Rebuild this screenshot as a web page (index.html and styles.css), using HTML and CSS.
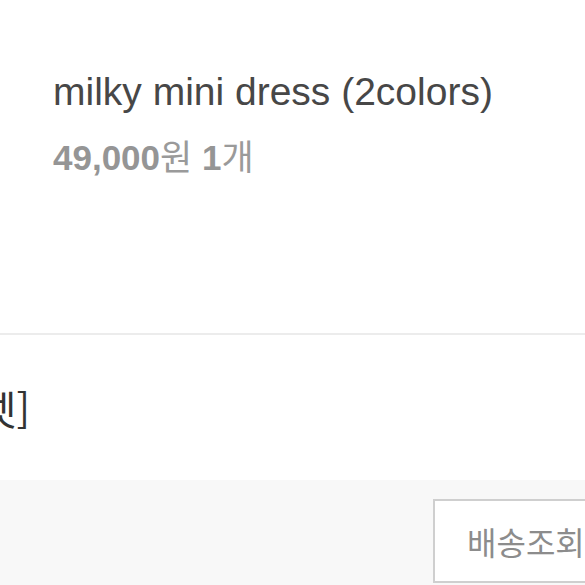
FILE: index.html
```html
<!DOCTYPE html>
<html lang="ko">
<head>
  <meta charset="UTF-8" />
  <meta name="viewport" content="width=device-width, initial-scale=1.0"/>
  <title>주문 상세</title>
  <link rel="stylesheet" href="styles.css">
</head>
<body>
  <div class="order-item">
    <div class="item-info">
      <p class="item-name">milky mini dress (2colors)</p>
      <p class="item-price"><b>49,000</b>원 <b>1</b>개</p>
    </div>
  </div>

  <div class="item-option">
    <div class="option-text">[블랙 세트 / 화이트 세트 셋]</div>
  </div>

  <div class="order-actions">
    <button type="button">배송조회</button>
    <button type="button">리뷰쓰기</button>
  </div>
</body>
</html>
```

FILE: styles.css
```css
html, body {
  margin: 0;
  padding: 0;
  overflow: hidden;
}

body {
  width: 585px;
  height: 585px;
  background: #fff;
  font-family: "Liberation Sans", Arial, "Noto Sans CJK KR", sans-serif;
}

.order-item {
  height: 335px;
  box-sizing: border-box;
  padding: 69px 53px 0;
  border-bottom: 2px solid #ececec;
}

.item-info p {
  margin: 0;
  white-space: nowrap;
}

.item-name {
  font-size: 39px;
  line-height: 46px;
  color: #474747;
}

.item-price {
  margin-top: 21px !important;
  font-size: 35px;
  line-height: 44px;
  color: #9a9a9a;
}

.item-price b {
  font-weight: bold;
  color: #959595;
}

.item-option {
  height: 145px;
  display: flex;
  align-items: center;
}

.option-text {
  width: 30px;
  display: flex;
  justify-content: flex-end;
  white-space: nowrap;
  font-family: "Noto Sans CJK KR", sans-serif;
  font-size: 40px;
  color: #333;
}

.order-actions {
  height: 105px;
  box-sizing: border-box;
  background: #f8f8f8;
  display: flex;
  gap: 12px;
  padding: 19px 0 0 433px;
}

.order-actions button {
  flex-shrink: 0;
  height: 84px;
  padding: 0 32px;
  background: #fff;
  border: 2px solid #cfcfcf;
  font-family: "Noto Sans CJK KR", sans-serif;
  font-size: 32px;
  color: #8c8c8c;
}
```
